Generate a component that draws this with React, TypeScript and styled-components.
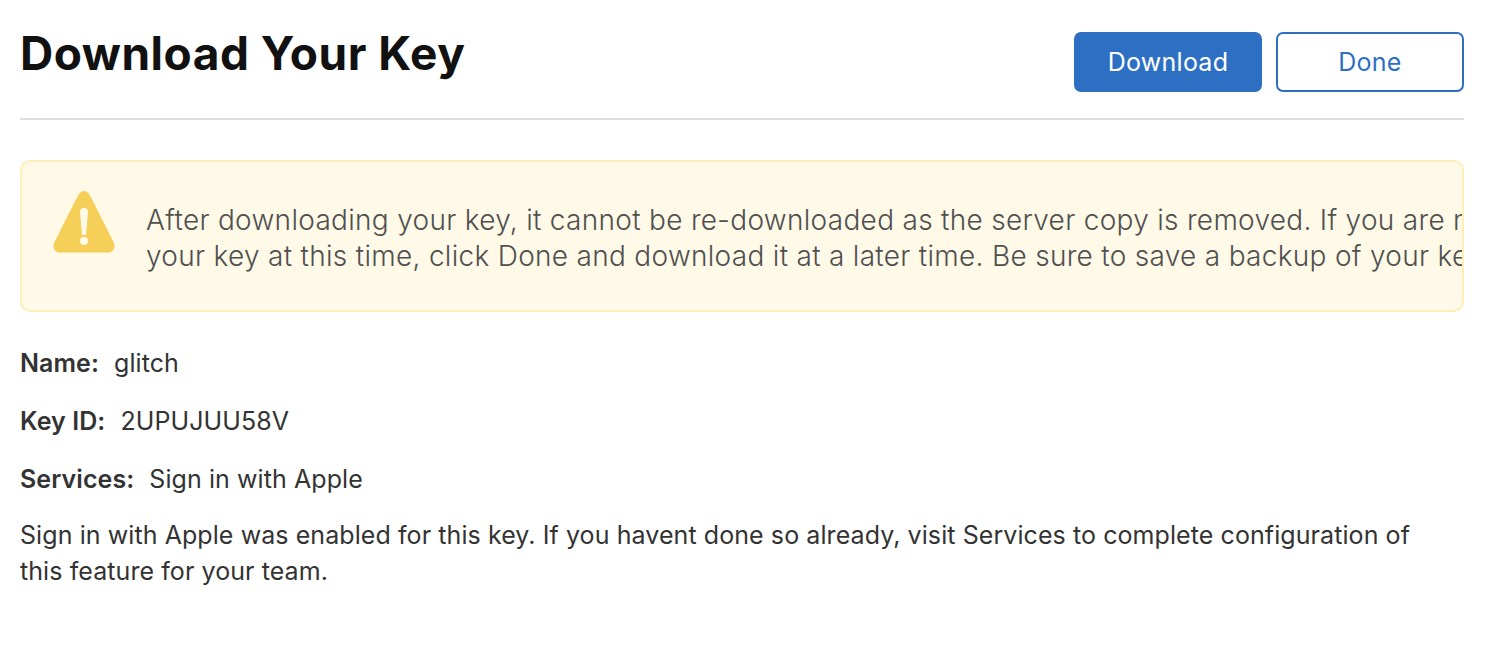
import React from "react";
import styled, { createGlobalStyle } from "styled-components";

const GlobalStyle = createGlobalStyle`
  html, body {
    margin: 0;
    background: #fff;
    font-family: Inter, "Liberation Sans", sans-serif;
    color: #333;
  }
`;

const Page = styled.div`
  padding: 32px 34px 0 20px;
`;

const Header = styled.header`
  display: flex;
  justify-content: space-between;
  align-items: flex-start;
  height: 86px;
  border-bottom: 2px solid #dedede;
`;

const Title = styled.h1`
  margin: 0;
  font-size: 46px;
  line-height: 42px;
  font-weight: 700;
  color: #111;
  letter-spacing: 0.5px;
`;

const Actions = styled.div`
  display: flex;
  gap: 14px;
`;

const Button = styled.button<{ $primary?: boolean }>`
  width: 188px;
  height: 60px;
  border-radius: 7px;
  border: 2px solid #2d70c3;
  background: ${(p) => (p.$primary ? "#2d70c3" : "#fff")};
  color: ${(p) => (p.$primary ? "#fff" : "#2d70c3")};
  font-family: inherit;
  font-size: 25px;
  font-weight: 400;
  letter-spacing: 0.25px;
  padding: 0;
`;

const Alert = styled.div`
  display: flex;
  align-items: flex-start;
  margin-top: 40px;
  height: 152px;
  box-sizing: border-box;
  padding: 28px 0 0 31px;
  background: #fff9e7;
  border: 2px solid #fcefb8;
  border-radius: 10px;
  overflow: hidden;
`;

const AlertIcon = styled.svg`
  flex: none;
  width: 62px;
  height: 64px;
`;

const AlertText = styled.div`
  margin-left: 31px;
  min-width: 0;
  padding-top: 12px;
  font-size: 28px;
  line-height: 36px;
  font-weight: 300;
  letter-spacing: 0.3px;
  color: #505050;
  white-space: nowrap;
`;

const Details = styled.div`
  margin-top: 33px;
  font-size: 25px;
  line-height: 36px;
  letter-spacing: 0.08px;
  color: #333;
`;

const Field = styled.p`
  margin: 0 0 22px;
`;

const Label = styled.strong`
  font-weight: 600;
  margin-right: 15px;
`;

const Note = styled.p`
  margin: -2px 0 0;
`;

const App = () => {
  return (
    <Page>
      <GlobalStyle />
      <Header>
        <Title>Download Your Key</Title>
        <Actions>
          <Button $primary>Download</Button>
          <Button>Done</Button>
        </Actions>
      </Header>
      <Alert>
        <AlertIcon viewBox="0 0 62 64">
          <path
            d="M31 1c-2.500 0-4.500 1.500-6 4.500L1.500 52C-1 57 1.500 62.500 7 62.500h48c5.500 0 8-5.500 5.500-10.500L37 5.500C35.500 2.500 33.500 1 31 1z"
            fill="#f5cf57"
          />
          <path d="M27 22a4 4 0 0 1 8 0L33 45h-4z" fill="#fff9e7" />
          <circle cx="31" cy="51" r="4" fill="#fff9e7" />
        </AlertIcon>
        <AlertText>
          After downloading your key, it cannot be re-downloaded as the server
          copy is removed. If you are not ready to download
          <br />
          your key at this time, click Done and download it at a later time. Be
          sure to save a backup of your key.
        </AlertText>
      </Alert>
      <Details>
        <Field>
          <Label>Name:</Label>glitch
        </Field>
        <Field>
          <Label>Key ID:</Label>2UPUJUU58V
        </Field>
        <Field>
          <Label>Services:</Label>Sign in with Apple
        </Field>
        <Note>
          Sign in with Apple was enabled for this key. If you havent done so
          already, visit Services to complete configuration of
          <br />
          this feature for your team.
        </Note>
      </Details>
    </Page>
  );
};

export default App;
